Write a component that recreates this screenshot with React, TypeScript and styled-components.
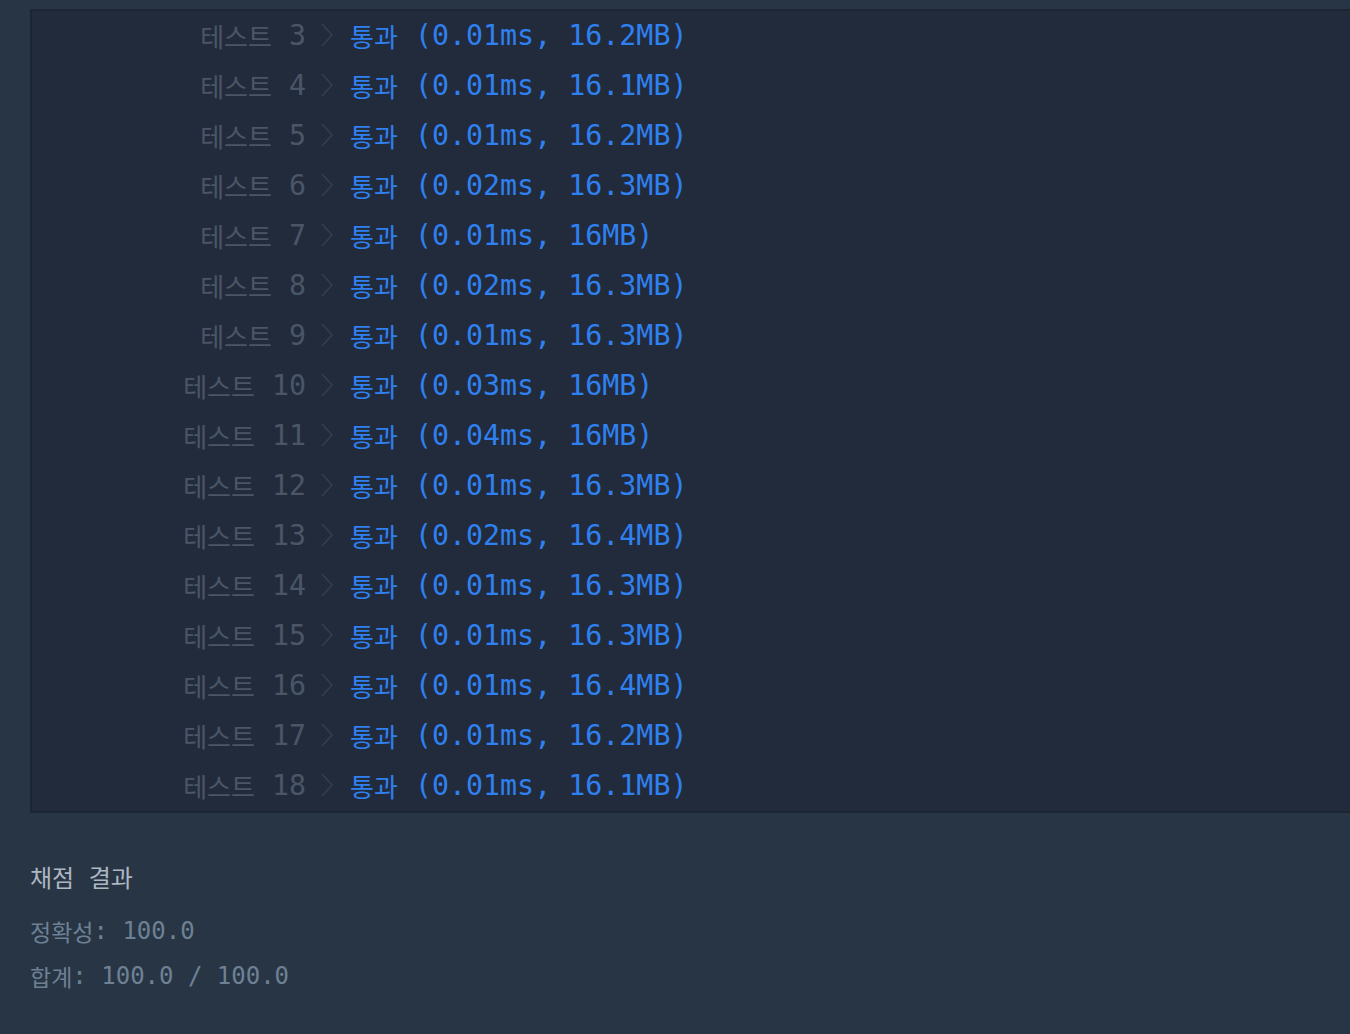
import React from "react";
import styled, { createGlobalStyle } from "styled-components";

const GlobalStyle = createGlobalStyle`
  html, body {
    margin: 0;
    padding: 0;
    background: #283545;
  }
  body {
    font-family: "DejaVu Sans Mono", "Noto Sans CJK KR", monospace;
  }
`;

const Page = styled.div`
  padding: 9px 0 0 30px;
  height: 1034px;
  box-sizing: border-box;
  overflow: hidden;
`;

const Panel = styled.div`
  background: #222b3c;
  border-top: 2px solid #1d2533;
  border-left: 2px solid #1d2533;
  border-bottom: 2px solid #1d2533;
  display: flex;
  flex-direction: column;
`;

const Row = styled.div`
  display: flex;
  align-items: center;
  height: 50px;
  box-sizing: border-box;
  padding-bottom: 2px;
  font-size: 28.3px;
  white-space: pre;
`;

const Label = styled.div`
  width: 274px;
  display: flex;
  justify-content: flex-end;
  align-items: center;
  color: #4a5667;
`;

const Ko = styled.span<{ $size: number }>`
  font-family: "Noto Sans CJK KR", sans-serif;
  font-size: ${(p) => p.$size}px;
`;

const Chevron = styled.svg`
  width: 12px;
  height: 24px;
  margin: 0 17px 0 15px;
  flex: none;
`;

const Result = styled.div`
  display: flex;
  align-items: center;
  color: #2f80f0;
`;

const Summary = styled.div`
  padding: 31px 0 0 0;
  display: flex;
  flex-direction: column;
`;

const Title = styled.div`
  color: #adb7c2;
  font-size: 24px;
  height: 64px;
  display: flex;
  align-items: center;
  white-space: pre;
`;

const Line = styled.div`
  color: #6e8194;
  font-size: 24px;
  height: 45px;
  display: flex;
  align-items: center;
  white-space: pre;
`;

const tests: [number, string, string][] = [
  [3, "0.01ms", "16.2MB"],
  [4, "0.01ms", "16.1MB"],
  [5, "0.01ms", "16.2MB"],
  [6, "0.02ms", "16.3MB"],
  [7, "0.01ms", "16MB"],
  [8, "0.02ms", "16.3MB"],
  [9, "0.01ms", "16.3MB"],
  [10, "0.03ms", "16MB"],
  [11, "0.04ms", "16MB"],
  [12, "0.01ms", "16.3MB"],
  [13, "0.02ms", "16.4MB"],
  [14, "0.01ms", "16.3MB"],
  [15, "0.01ms", "16.3MB"],
  [16, "0.01ms", "16.4MB"],
  [17, "0.01ms", "16.2MB"],
  [18, "0.01ms", "16.1MB"],
];

export default function App() {
  return (
    <>
      <GlobalStyle />
      <Page>
        <Panel>
          {tests.map(([n, t, m]) => (
            <Row key={n}>
              <Label>
                <Ko $size={26}>테스트</Ko>
                <span>{` ${n}`}</span>
              </Label>
              <Chevron viewBox="0 0 12 24">
                <path d="M1 1 L11 12 L1 23" fill="none" stroke="#344051" strokeWidth="1.4" />
              </Chevron>
              <Result>
                <Ko $size={26}>통과</Ko>
                <span>{` (${t}, ${m})`}</span>
              </Result>
            </Row>
          ))}
        </Panel>
        <Summary>
          <Title>
            <Ko $size={24}>채점</Ko>
            <span>{" "}</span>
            <Ko $size={24}>결과</Ko>
          </Title>
          <Line>
            <Ko $size={23}>정확성</Ko>
            <span>{": 100.0"}</span>
          </Line>
          <Line>
            <Ko $size={23}>합계</Ko>
            <span>{": 100.0 / 100.0"}</span>
          </Line>
        </Summary>
      </Page>
    </>
  );
}
